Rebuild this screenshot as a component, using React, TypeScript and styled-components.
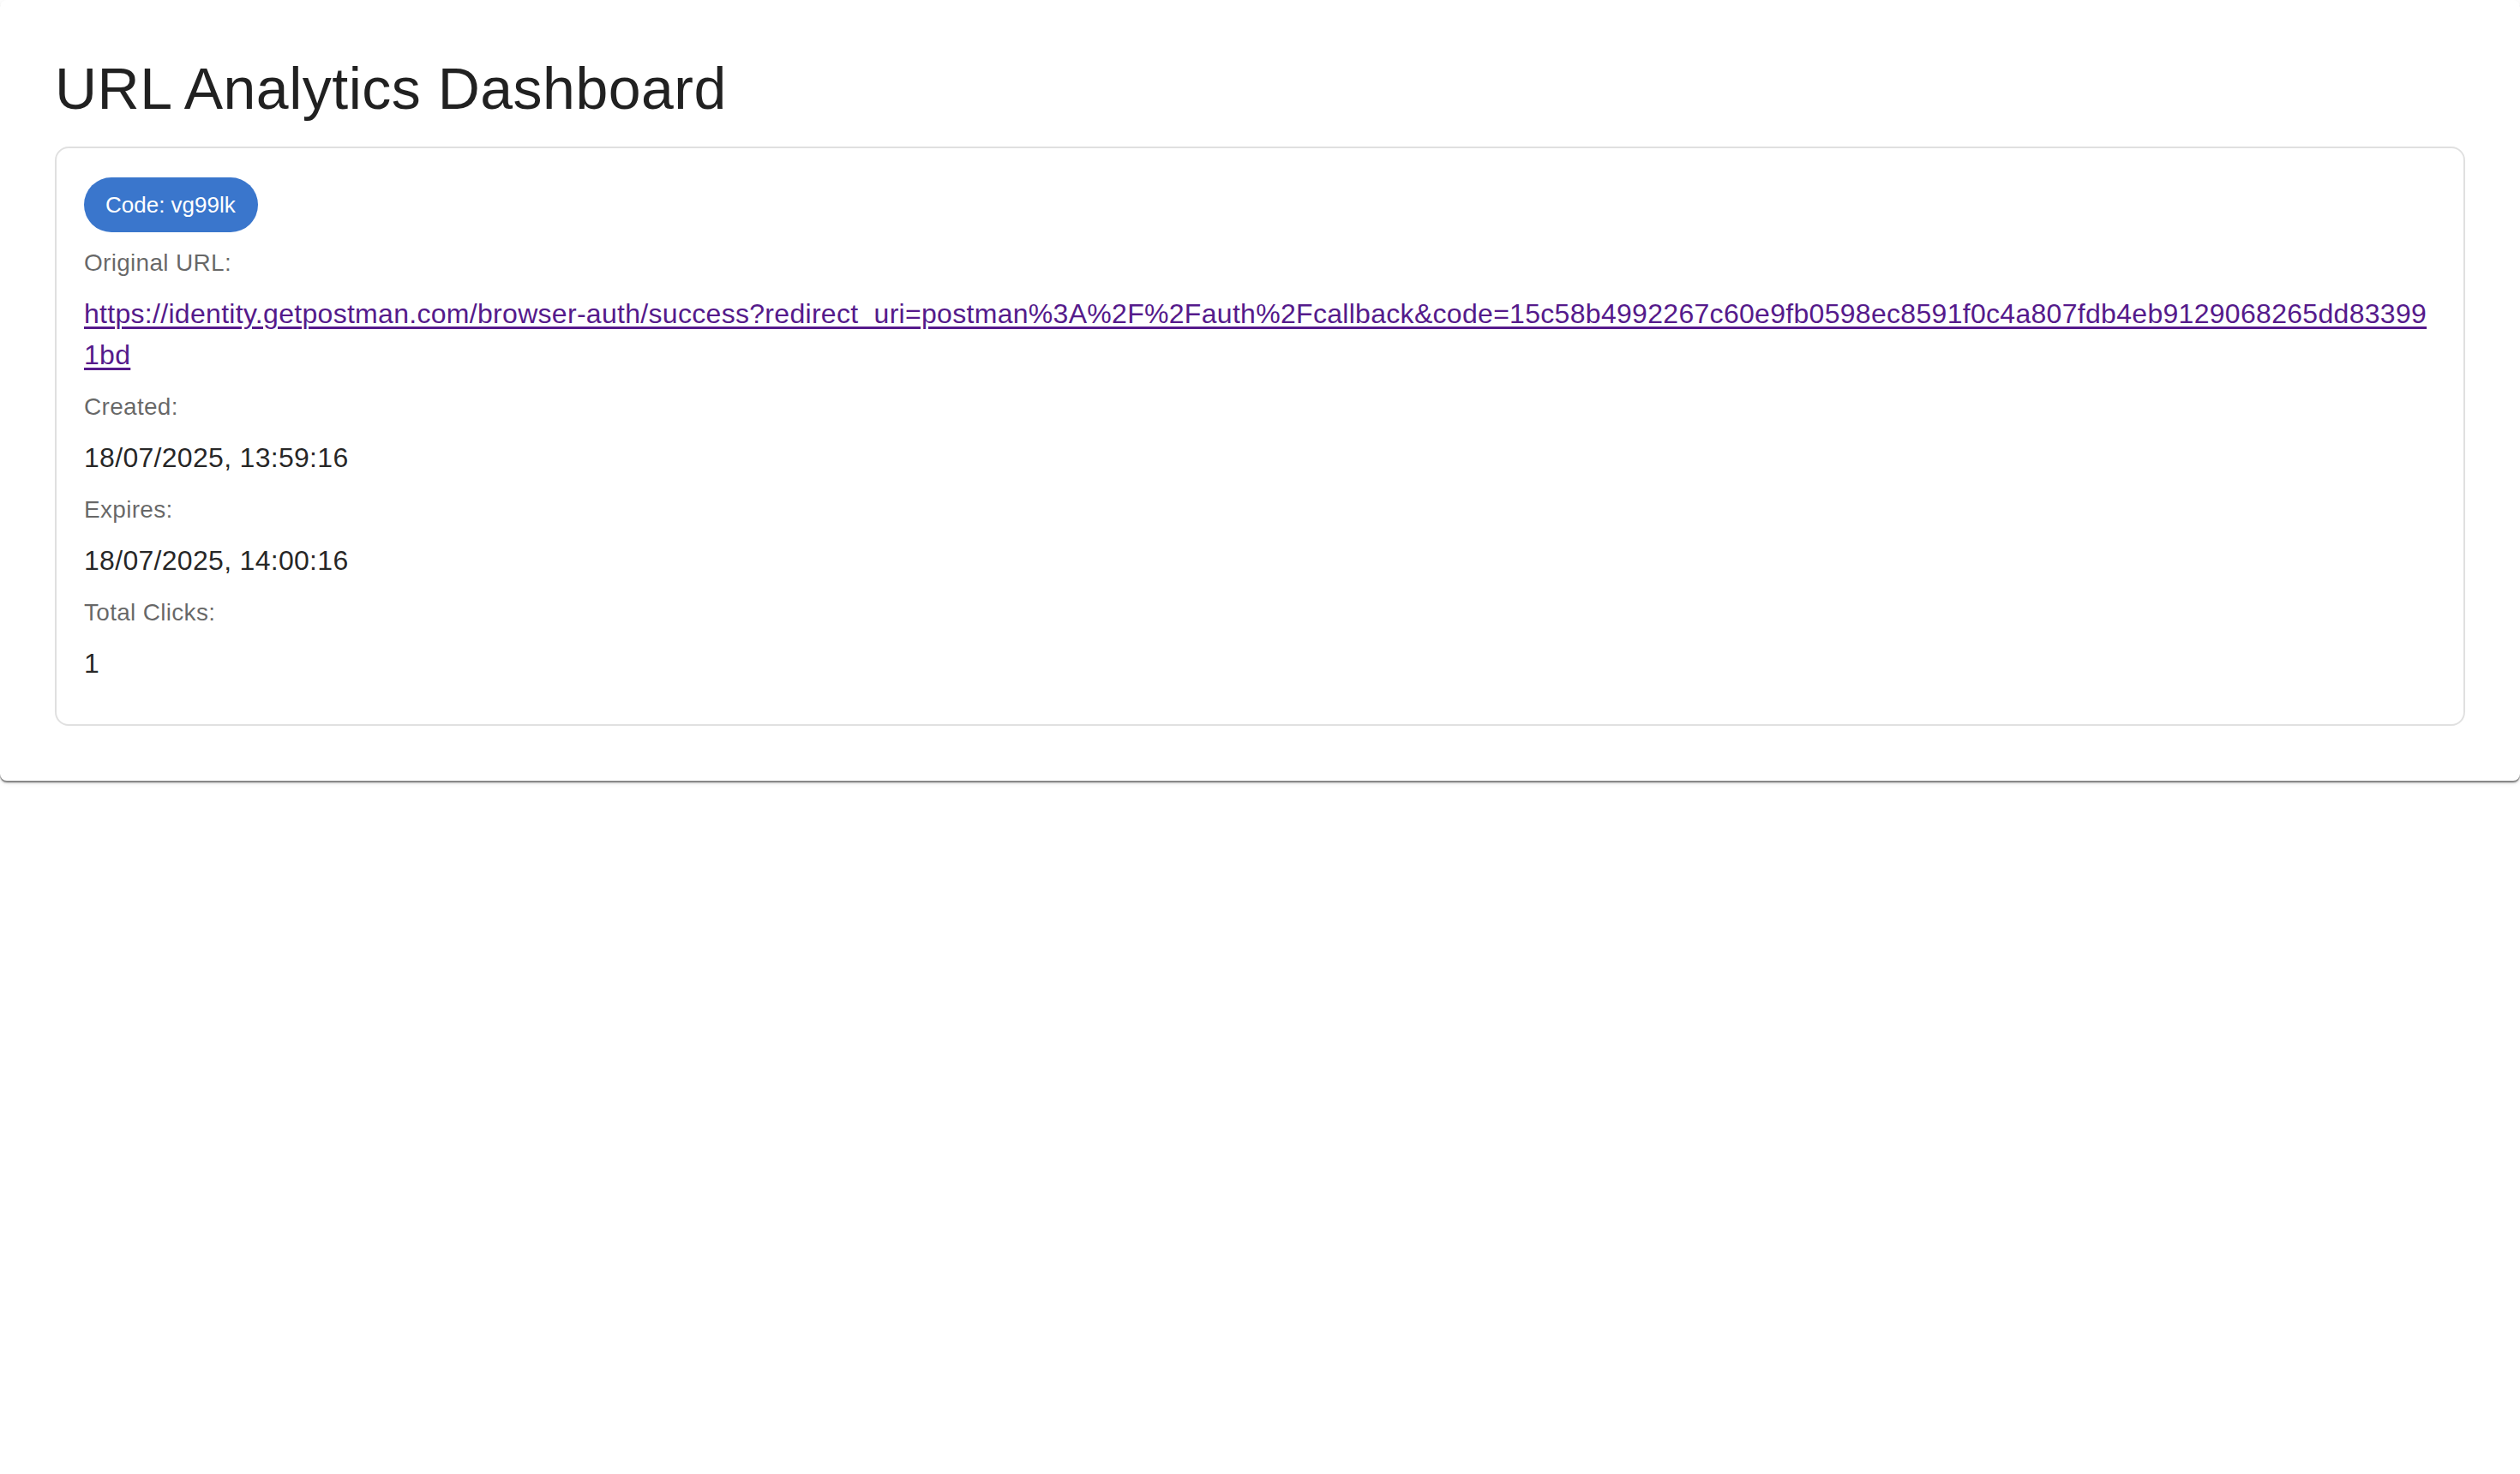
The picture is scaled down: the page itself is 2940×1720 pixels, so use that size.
import React from "react";
import styled, { createGlobalStyle } from "styled-components";

const GlobalStyle = createGlobalStyle`
  html, body {
    margin: 0;
    padding: 0;
    background: #ffffff;
  }
  body {
    font-family: "Liberation Sans", Arial, Helvetica, sans-serif;
    color: rgba(0, 0, 0, 0.87);
  }
`;

const Paper = styled.div`
  background: #ffffff;
  border-radius: 8px;
  padding: 62px 64px 64px;
  margin-bottom: 16px;
  box-shadow: 0px 2px 0px 0px rgba(0, 0, 0, 0.32),
    0px 3px 2px 0px rgba(0, 0, 0, 0.16), 0px 2px 6px 0px rgba(0, 0, 0, 0.1);
`;

const Title = styled.h1`
  margin: 0 0 25px;
  font-family: "Liberation Sans", Arial, Helvetica, sans-serif;
  font-weight: 400;
  font-size: 68px;
  line-height: 1.235;
  letter-spacing: 0.5px;
  color: rgba(0, 0, 0, 0.87);
`;

const Card = styled.div`
  border: 2px solid rgba(0, 0, 0, 0.12);
  border-radius: 16px;
  padding: 34px 32px 46px;
  display: flex;
  flex-direction: column;
  align-items: flex-start;
  gap: 16px;
`;

const Chip = styled.span`
  display: inline-flex;
  align-items: center;
  height: 64px;
  padding: 0 26px 0 25px;
  border-radius: 32px;
  background: #3a76cc;
  color: #ffffff;
  font-size: 26px;
  line-height: 1;
`;

const Label = styled.div`
  font-size: 28px;
  line-height: 40px;
  letter-spacing: 0.3px;
  color: rgba(0, 0, 0, 0.6);
`;

const Value = styled.div`
  font-size: 32px;
  line-height: 48px;
  letter-spacing: 0.3px;
  color: rgba(0, 0, 0, 0.87);
  margin-top: -1px;
  margin-bottom: 1px;
`;

const UrlLink = styled.a`
  display: block;
  align-self: stretch;
  font-size: 32px;
  line-height: 48px;
  letter-spacing: 0.3px;
  color: #551a8b;
  text-decoration: underline;
  text-decoration-thickness: 3px;
  text-underline-offset: 4px;
  word-break: break-all;
  margin-top: -1px;
  margin-bottom: 1px;
`;

const url =
  "https://identity.getpostman.com/browser-auth/success?redirect_uri=postman%3A%2F%2Fauth%2Fcallback&code=15c58b4992267c60e9fb0598ec8591f0c4a807fdb4eb9129068265dd833991bd";

export default function App() {
  return (
    <>
      <GlobalStyle />
      <Paper>
        <Title>URL Analytics Dashboard</Title>
        <Card>
          <Chip>Code: vg99lk</Chip>
          <Label>Original URL:</Label>
          <UrlLink href={url}>{url}</UrlLink>
          <Label>Created:</Label>
          <Value>18/07/2025, 13:59:16</Value>
          <Label>Expires:</Label>
          <Value>18/07/2025, 14:00:16</Value>
          <Label>Total Clicks:</Label>
          <Value>1</Value>
        </Card>
      </Paper>
    </>
  );
}
